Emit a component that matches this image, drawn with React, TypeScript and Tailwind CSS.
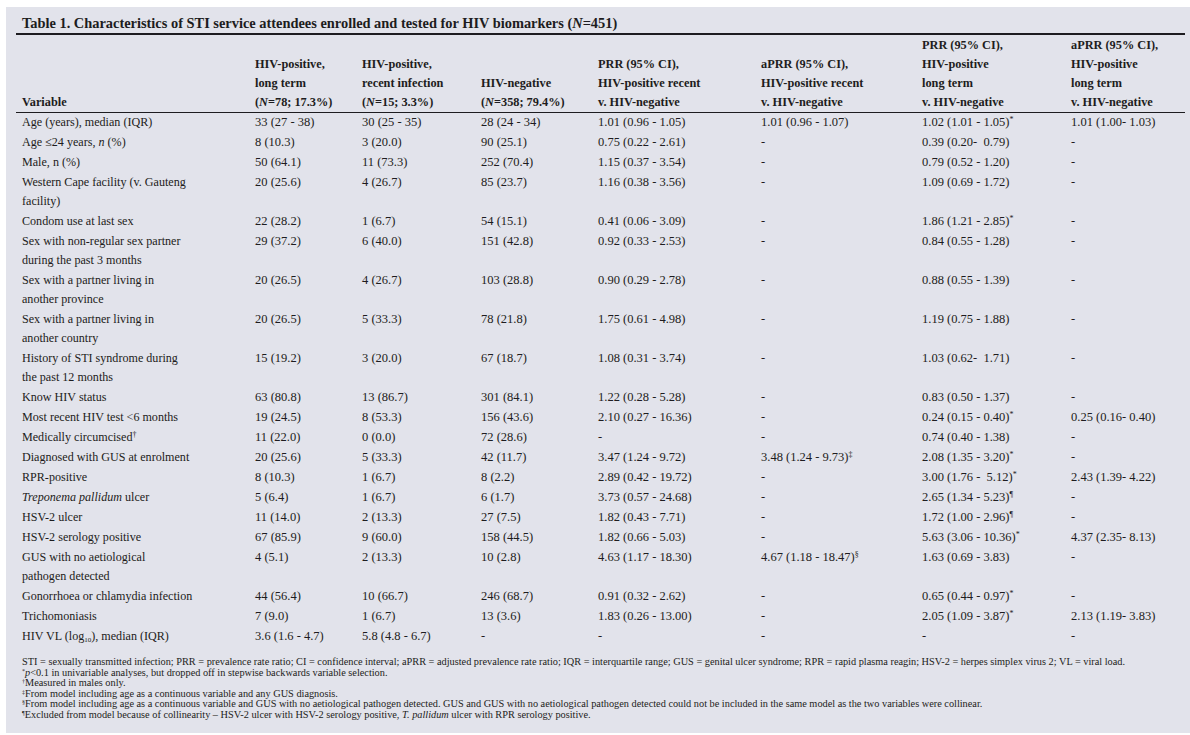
import React from "react";

type Cell = React.ReactNode;

const S = ({ children }: { children: React.ReactNode }) => (
  <sup className="text-[8px]">{children}</sup>
);

const F = ({ children }: { children: React.ReactNode }) => (
  <sup className="text-[6px]">{children}</sup>
);

const rows: Cell[][] = [
  ["Age (years), median (IQR)", "33 (27 - 38)", "30 (25 - 35)", "28 (24 - 34)", "1.01 (0.96 - 1.05)", "1.01 (0.96 - 1.07)", <>1.02 (1.01 - 1.05)<S>*</S></>, "1.01 (1.00- 1.03)"],
  [<>Age ≤24 years, <i>n</i> (%)</>, "8 (10.3)", "3 (20.0)", "90 (25.1)", "0.75 (0.22 - 2.61)", "-", "0.39 (0.20-  0.79)", "-"],
  ["Male, n (%)", "50 (64.1)", "11 (73.3)", "252 (70.4)", "1.15 (0.37 - 3.54)", "-", "0.79 (0.52 - 1.20)", "-"],
  [<>Western Cape facility (v. Gauteng<br />facility)</>, "20 (25.6)", "4 (26.7)", "85 (23.7)", "1.16 (0.38 - 3.56)", "-", "1.09 (0.69 - 1.72)", "-"],
  ["Condom use at last sex", "22 (28.2)", "1 (6.7)", "54 (15.1)", "0.41 (0.06 - 3.09)", "-", <>1.86 (1.21 - 2.85)<S>*</S></>, "-"],
  [<>Sex with non-regular sex partner<br />during the past 3 months</>, "29 (37.2)", "6 (40.0)", "151 (42.8)", "0.92 (0.33 - 2.53)", "-", "0.84 (0.55 - 1.28)", "-"],
  [<>Sex with a partner living in<br />another province</>, "20 (26.5)", "4 (26.7)", "103 (28.8)", "0.90 (0.29 - 2.78)", "-", "0.88 (0.55 - 1.39)", "-"],
  [<>Sex with a partner living in<br />another country</>, "20 (26.5)", "5 (33.3)", "78 (21.8)", "1.75 (0.61 - 4.98)", "-", "1.19 (0.75 - 1.88)", "-"],
  [<>History of STI syndrome during<br />the past 12 months</>, "15 (19.2)", "3 (20.0)", "67 (18.7)", "1.08 (0.31 - 3.74)", "-", "1.03 (0.62-  1.71)", "-"],
  ["Know HIV status", "63 (80.8)", "13 (86.7)", "301 (84.1)", "1.22 (0.28 - 5.28)", "-", "0.83 (0.50 - 1.37)", "-"],
  ["Most recent HIV test <6 months", "19 (24.5)", "8 (53.3)", "156 (43.6)", "2.10 (0.27 - 16.36)", "-", <>0.24 (0.15 - 0.40)<S>*</S></>, "0.25 (0.16- 0.40)"],
  [<>Medically circumcised<S>†</S></>, "11 (22.0)", "0 (0.0)", "72 (28.6)", "-", "-", "0.74 (0.40 - 1.38)", "-"],
  ["Diagnosed with GUS at enrolment", "20 (25.6)", "5 (33.3)", "42 (11.7)", "3.47 (1.24 - 9.72)", <>3.48 (1.24 - 9.73)<S>‡</S></>, <>2.08 (1.35 - 3.20)<S>*</S></>, "-"],
  ["RPR-positive", "8 (10.3)", "1 (6.7)", "8 (2.2)", "2.89 (0.42 - 19.72)", "-", <>3.00 (1.76 -  5.12)<S>*</S></>, "2.43 (1.39- 4.22)"],
  [<><i>Treponema pallidum</i> ulcer</>, "5 (6.4)", "1 (6.7)", "6 (1.7)", "3.73 (0.57 - 24.68)", "-", <>2.65 (1.34 - 5.23)<S>¶</S></>, "-"],
  ["HSV-2 ulcer", "11 (14.0)", "2 (13.3)", "27 (7.5)", "1.82 (0.43 - 7.71)", "-", <>1.72 (1.00 - 2.96)<S>¶</S></>, "-"],
  ["HSV-2 serology positive", "67 (85.9)", "9 (60.0)", "158 (44.5)", "1.82 (0.66 - 5.03)", "-", <>5.63 (3.06 - 10.36)<S>*</S></>, "4.37 (2.35- 8.13)"],
  [<>GUS with no aetiological<br />pathogen detected</>, "4 (5.1)", "2 (13.3)", "10 (2.8)", "4.63 (1.17 - 18.30)", <>4.67 (1.18 - 18.47)<S>§</S></>, "1.63 (0.69 - 3.83)", "-"],
  ["Gonorrhoea or chlamydia infection", "44 (56.4)", "10 (66.7)", "246 (68.7)", "0.91 (0.32 - 2.62)", "-", <>0.65 (0.44 - 0.97)<S>*</S></>, "-"],
  ["Trichomoniasis", "7 (9.0)", "1 (6.7)", "13 (3.6)", "1.83 (0.26 - 13.00)", "-", <>2.05 (1.09 - 3.87)<S>*</S></>, "2.13 (1.19- 3.83)"],
  [<>HIV VL (log<sub className="text-[7px]">10</sub>), median (IQR)</>, "3.6 (1.6 - 4.7)", "5.8 (4.8 - 6.7)", "-", "-", "-", "-", "-"],
];

const GRID = "grid grid-cols-[239px_107px_119px_117px_163px_161px_149px_1fr]";

export default function App() {
  return (
    <div className="min-h-screen bg-white pl-[6px] pt-[7px]">
      <div className="h-[726px] bg-[#e2e3eb] pl-[10px] pr-[5px] pt-[7px] text-[#1d1c20] font-['Liberation_Serif',serif]">
        <div className="pl-[6px] text-[14.4px] font-bold leading-[19px] whitespace-nowrap">
          Table 1. Characteristics of STI service attendees enrolled and tested for HIV biomarkers (<i>N</i>=451)
        </div>
        <div className="h-[2px] bg-[#1d1c20]" />
        <div className={`${GRID} items-end pt-px text-[12.3px] font-bold leading-[19px] whitespace-nowrap`}>
          <div className="pl-[6px]">Variable</div>
          <div>HIV-positive,<br />long term<br />(<i>N</i>=78; 17.3%)</div>
          <div>HIV-positive,<br />recent infection<br />(<i>N</i>=15; 3.3%)</div>
          <div>HIV-negative<br />(<i>N</i>=358; 79.4%)</div>
          <div>PRR (95% CI),<br />HIV-positive recent<br />v. HIV-negative</div>
          <div>aPRR (95% CI),<br />HIV-positive recent<br />v. HIV-negative</div>
          <div>PRR (95% CI),<br />HIV-positive<br />long term<br />v. HIV-negative</div>
          <div>aPRR (95% CI),<br />HIV-positive<br />long term<br />v. HIV-negative</div>
        </div>
        <div className="h-px bg-[#1d1c20]" />
        <div className="text-[12.5px] leading-[19px]">
          {rows.map((r, i) => (
            <div key={i} className={`${GRID} pb-px`}>
              {r.map((c, j) => (
                <div key={j} className={`whitespace-pre ${j === 0 ? "pl-[6px] text-[12.1px]" : ""}`}>
                  {c}
                </div>
              ))}
            </div>
          ))}
        </div>
        <div className="mt-[10px] pl-[6px] text-[10.3px] leading-[10.5px] whitespace-nowrap">
          <div>
            STI = sexually transmitted infection; PRR = prevalence rate ratio; CI = confidence interval; aPRR = adjusted prevalence rate ratio; IQR = interquartile range; GUS = genital ulcer syndrome; RPR = rapid plasma reagin; HSV-2 = herpes simplex virus 2; VL = viral load.
          </div>
          <div>
            <F>*</F><i>p</i>&lt;0.1 in univariable analyses, but dropped off in stepwise backwards variable selection.
          </div>
          <div><F>†</F>Measured in males only.</div>
          <div><F>‡</F>From model including age as a continuous variable and any GUS diagnosis.</div>
          <div>
            <F>§</F>From model including age as a continuous variable and GUS with no aetiological pathogen detected. GUS and GUS with no aetiological pathogen detected could not be included in the same model as the two variables were collinear.
          </div>
          <div>
            <F>¶</F>Excluded from model because of collinearity – HSV-2 ulcer with HSV-2 serology positive, <i>T. pallidum</i> ulcer with RPR serology positive.
          </div>
        </div>
      </div>
    </div>
  );
}
